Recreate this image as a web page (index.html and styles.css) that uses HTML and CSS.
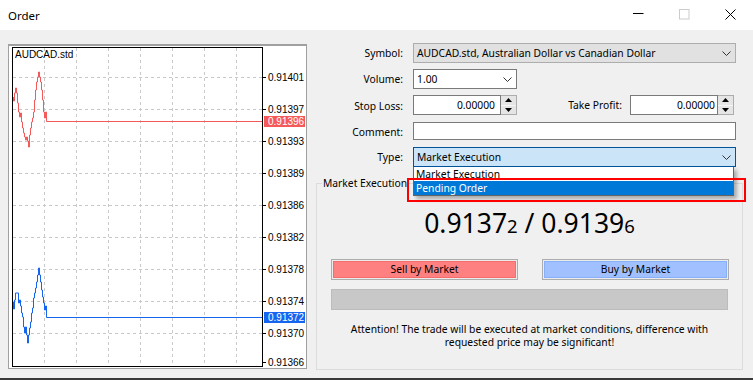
FILE: index.html
```html
<!DOCTYPE html>
<html lang="en">
<head>
<meta charset="utf-8">
<title>Order</title>
<link rel="stylesheet" href="styles.css">
</head>
<body>
<div class="window">
  <header class="titlebar">
    <span class="title">Order</span>
    <div class="controls">
      <span class="ctl"><svg width="11" height="12" viewBox="0 0 11 12"><path d="M0 4.5H10.5" stroke="#000" stroke-width="1"/></svg></span>
      <span class="ctl"><svg width="11" height="12" viewBox="0 0 11 12"><rect x="0.5" y="0.5" width="9.5" height="9.5" fill="none" stroke="#cccccc"/></svg></span>
      <span class="ctl"><svg width="11" height="12" viewBox="0 0 11 12"><path d="M0.5 0.5L10.5 10.5M10.5 0.5L0.5 10.5" stroke="#000" stroke-width="1"/></svg></span>
    </div>
  </header>

  <div class="main">
    <div class="chartframe">
      <svg class="chart" width="297" height="322" viewBox="9 46 297 322">
        <g class="grid">
          <path d="M44.5 48V366M76.5 48V366M108.5 48V366M140.5 48V366M172.5 48V366M204.5 48V366M236.5 48V366"/>
          <path d="M13 77.5H262M13 109.5H262M13 141.5H262M13 173.5H262M13 205.5H262M13 237.5H262M13 269.5H262M13 301.5H262M13 333.5H262"/>
        </g>
        <rect class="frame" x="12.5" y="47.5" width="250" height="319"/>
        <path class="tick" d="M263 77.5H266M263 109.5H266M263 141.5H266M263 173.5H266M263 205.5H266M263 237.5H266M263 269.5H266M263 301.5H266M263 333.5H266M263 362.5H266"/>
        <polyline class="ask" points="13.5,97 13.5,101 14.5,101 14.5,93 15.5,93 15.5,88 16.5,88 16.5,93 17.5,93 17.5,103 18.5,103 18.5,112 19.5,112 19.5,117 20.5,117 20.5,113 21.5,113 21.5,122 22.5,122 22.5,128 23.5,128 23.5,133 24.5,133 24.5,137 25.5,137 25.5,140 26.5,140 26.5,137 27.5,137 27.5,141 28.5,141 28.5,147 29.5,147 29.5,135 30.5,135 30.5,128 31.5,128 31.5,122 32.5,122 32.5,118 33.5,118 33.5,112 34.5,112 34.5,100 35.5,100 35.5,90 36.5,90 36.5,82 37.5,82 37.5,77 38.5,77 38.5,72 39.5,72 39.5,77 40.5,77 40.5,82 41.5,82 41.5,90 42.5,90 42.5,100 43.5,100 43.5,112 44.5,112 44.5,118 45.5,118 45.5,112 46.5,112 46.5,121.5 262,121.5"/>
        <polyline class="bid" points="13.5,302 13.5,309 14.5,309 14.5,300 15.5,300 15.5,293 18.5,293 18.5,303 19.5,303 19.5,300 20.5,300 20.5,306 21.5,306 21.5,313 22.5,313 22.5,317 23.5,317 23.5,327 24.5,327 24.5,333 25.5,333 25.5,327 26.5,327 26.5,335 27.5,335 27.5,343 28.5,343 28.5,335 29.5,335 29.5,328 30.5,328 30.5,322 31.5,322 31.5,313 32.5,313 32.5,308 33.5,308 33.5,298 34.5,298 34.5,293 35.5,293 35.5,288 36.5,288 36.5,282 37.5,282 37.5,275 38.5,275 38.5,268 39.5,268 39.5,275 40.5,275 40.5,282 41.5,282 41.5,290 42.5,290 42.5,297 43.5,297 43.5,303 44.5,303 44.5,310 45.5,310 45.5,306 46.5,306 46.5,317.5 262,317.5"/>
        <text x="15" y="58">AUDCAD.std</text>
        <text x="268" y="81">0.91401</text>
        <text x="268" y="113">0.91397</text>
        <rect class="lab-ask" x="264" y="116" width="41" height="11"/>
        <text class="on" x="268" y="125">0.91396</text>
        <text x="268" y="145">0.91393</text>
        <text x="268" y="177">0.91389</text>
        <text x="268" y="209">0.91386</text>
        <text x="268" y="241">0.91382</text>
        <text x="268" y="273">0.91378</text>
        <text x="268" y="305">0.91374</text>
        <rect class="lab-bid" x="264" y="312" width="41" height="11"/>
        <text class="on" x="268" y="321">0.91372</text>
        <text x="268" y="337">0.91370</text>
        <text x="268" y="366">0.91366</text>
      </svg>
    </div>

    <div class="panel">
      <div class="form">
        <span class="lbl">Symbol:</span>
        <div class="combo combo-list">
          <span class="val">AUDCAD.std, Australian Dollar vs Canadian Dollar</span>
          <svg class="chev" width="9" height="5" viewBox="0 0 9 5"><path d="M0.5 0.5L4.5 4.5L8.5 0.5" fill="none" stroke="#333" stroke-width="1"/></svg>
        </div>

        <span class="lbl">Volume:</span>
        <div class="combo combo-edit vol">
          <span class="val">1.00</span>
          <svg class="chev" width="9" height="5" viewBox="0 0 9 5"><path d="M0.5 0.5L4.5 4.5L8.5 0.5" fill="none" stroke="#333" stroke-width="1"/></svg>
        </div>

        <span class="lbl">Stop Loss:</span>
        <div class="slrow">
          <div class="spinfield">
            <span class="num">0.00000</span>
            <span class="spin">
              <span class="sb"><svg width="7" height="4" viewBox="0 0 7 4"><path d="M3.5 0L7 4H0Z"/></svg></span>
              <span class="sb"><svg width="7" height="4" viewBox="0 0 7 4"><path d="M0 0H7L3.5 4Z"/></svg></span>
            </span>
          </div>
          <span class="lbl tp">Take Profit:</span>
          <div class="spinfield tpf">
            <span class="num">0.00000</span>
            <span class="spin">
              <span class="sb"><svg width="7" height="4" viewBox="0 0 7 4"><path d="M3.5 0L7 4H0Z"/></svg></span>
              <span class="sb"><svg width="7" height="4" viewBox="0 0 7 4"><path d="M0 0H7L3.5 4Z"/></svg></span>
            </span>
          </div>
        </div>

        <span class="lbl">Comment:</span>
        <div class="textbox"></div>

        <span class="lbl">Type:</span>
        <div class="combo combo-active">
          <span class="val">Market Execution</span>
          <svg class="chev" width="9" height="5" viewBox="0 0 9 5"><path d="M0.5 0.5L4.5 4.5L8.5 0.5" fill="none" stroke="#333" stroke-width="1"/></svg>
        </div>
      </div>

      <section class="group">
        <span class="legend">Market Execution</span>
        <div class="price">0.9137<span class="pip">2</span> / 0.9139<span class="pip">6</span></div>
        <div class="buttons">
          <span class="btn sell">Sell by Market</span>
          <span class="btn buy">Buy by Market</span>
        </div>
        <div class="bar"></div>
        <p class="note">Attention! The trade will be executed at market conditions, difference with<br>requested price may be significant!</p>
      </section>

      <div class="dropdown">
        <div class="opt">Market Execution</div>
        <div class="opt sel">Pending Order</div>
      </div>
      <div class="highlight"></div>
    </div>
  </div>
  <div class="bottomline"></div>
</div>
</body>
</html>
```

FILE: styles.css
```css
* { box-sizing: border-box; }
html, body { margin: 0; padding: 0; }
body {
  width: 753px;
  height: 380px;
  overflow: hidden;
  background: #f0f0f0;
  font-family: "Noto Sans", "Open Sans", Arial, sans-serif;
  font-size: 10.3px;
  color: #000;
}
.window { display: flex; flex-direction: column; height: 380px; }

.titlebar { flex: 0 0 30px; display: flex; align-items: center; background: #fff; }
.title { flex: 1; padding-left: 8px; font-size: 11.5px; }
.controls { display: flex; align-self: stretch; }
.ctl { width: 46px; display: flex; align-items: center; justify-content: center; }
.ctl svg { display: block; }

.main { flex: 1; display: flex; align-items: flex-start; padding-top: 13px; }

.chartframe {
  flex: 0 0 299px;
  height: 325px;
  margin: 1px 0 0 8px;
  border: 1px solid #a0a0a0;
  border-top-width: 2px;
  background: #fff;
}
.chart { display: block; }
.chart .grid { stroke: #c8c8c8; stroke-width: 1; stroke-dasharray: 3 3; fill: none; }
.chart .frame { stroke: #000; fill: none; }
.chart .tick { stroke: #000; }
.chart .ask { stroke: #f55a5a; fill: none; }
.chart .bid { stroke: #1565f0; fill: none; }
.chart text { font-family: "Liberation Sans", Arial, sans-serif; font-size: 10px; fill: #000; }
.chart .lab-ask { fill: #f55a5a; }
.chart .lab-bid { fill: #1565f0; }
.chart text.on { fill: #fff; }

.panel { flex: 1; position: relative; display: flex; flex-direction: column; }

.form {
  display: grid;
  grid-template-columns: 96px 323px;
  grid-template-rows: 20px 20px 21px 19px 20px;
  column-gap: 10px;
  row-gap: 6px;
}
.lbl { height: 20px; line-height: 20px; text-align: right; white-space: nowrap; align-self: center; }

.combo {
  height: 20px;
  display: flex;
  align-items: center;
  justify-content: space-between;
  padding: 0 4px 0 3px;
  border: 1px solid #7a7a7a;
  background: #fff;
  white-space: nowrap;
}
.combo-list { background: #e1e1e1; border-color: #adadad; }
.combo-active { background: #cce4f7; border-color: #005499; }
.vol { width: 104px; }
.chev { display: block; flex: 0 0 auto; }

.slrow { display: flex; align-items: flex-start; height: 20px; }
.slrow .tp { margin-left: auto; margin-right: 8px; }
.spinfield { display: flex; width: 104px; height: 20px; }
.tpf { margin-right: 2px; }
.num {
  flex: 1;
  border: 1px solid #7a7a7a;
  background: #fff;
  text-align: right;
  line-height: 18px;
  padding-right: 5px;
}
.tpf .num { padding-right: 2px; }
.spin {
  width: 16px;
  display: flex;
  flex-direction: column;
  border: 1px solid #adadad;
  border-left: 0;
  background: #e5e5e5;
}
.sb { flex: 1; display: flex; align-items: center; justify-content: center; }
.sb + .sb { border-top: 1px solid #f6f6f6; }
.sb svg { display: block; fill: #000; }

.textbox { height: 18px; border: 1px solid #7a7a7a; background: #fff; align-self: start; }

.group {
  height: 187px;
  margin: 16px 10px 0 9px;
  border: 1px solid #dcdcdc;
  display: flex;
  flex-direction: column;
}
.legend {
  align-self: flex-start;
  margin: -8px 0 0 5px;
  padding: 0 1px;
  line-height: 14px;
  background: #f0f0f0;
}
.price { margin-top: 18px; font-size: 26.5px; line-height: 31px; text-align: center; }
.pip { font-size: 18.5px; }
.buttons { display: flex; justify-content: space-between; margin-top: 18px; padding: 0 13px 0 14px; }
.btn {
  width: 187px;
  height: 21px;
  line-height: 19px;
  text-align: center;
  border: 1px solid #acacac;
}
.sell { background: #ff8080; box-shadow: inset 0 0 0 1px #ececec, inset 0 0 0 2px #f56c6c; }
.buy { background: #a0c0ff; box-shadow: inset 0 0 0 1px #ececec, inset 0 0 0 2px #88b0fa; }
.bar { height: 21px; margin: 9px 14px 0 14px; background: #c8c8c8; border: 1px solid #bcbcbc; }
.note { margin: 13px 0 0; line-height: 13px; text-align: center; }

.dropdown {
  position: absolute;
  left: 106px;
  top: 124px;
  width: 321px;
  height: 29px;
  border: 1px solid #646464;
  border-top: 0;
  background: #fff;
  box-shadow: 3px 3px 4px rgba(0, 0, 0, 0.3);
}
.opt { height: 14px; line-height: 15px; padding-left: 2px; white-space: nowrap; }
.opt.sel { background: #0078d7; color: #fff; line-height: 15px; }
.highlight {
  position: absolute;
  left: 100px;
  top: 135px;
  width: 339px;
  height: 24px;
  border: 2px solid #ff0000;
}

.bottomline { flex: 0 0 2px; background: #3a3a3a; }
```
